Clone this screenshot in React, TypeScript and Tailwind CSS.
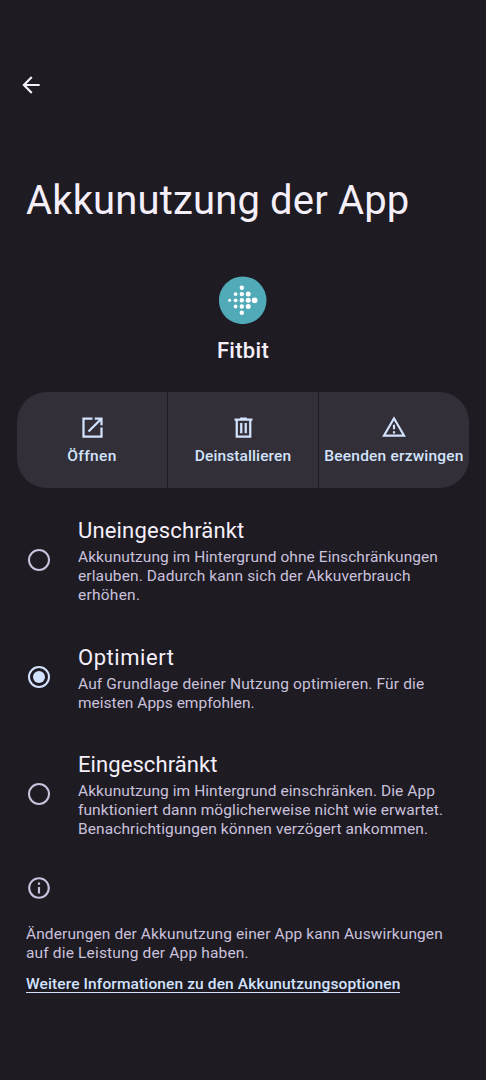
import type { ReactNode } from 'react';
import { clsx } from 'clsx';

interface Line {
  text: string;
  tracking: string;
}

interface BatteryOption {
  title: string;
  titleTracking: string;
  lines: Line[];
  selected?: boolean;
}

const options: BatteryOption[] = [
  {
    title: 'Uneingeschränkt',
    titleTracking: 'tracking-[0.16px]',
    lines: [
      { text: 'Akkunutzung im Hintergrund ohne Einschränkungen', tracking: 'tracking-[0.07px]' },
      { text: 'erlauben. Dadurch kann sich der Akkuverbrauch', tracking: 'tracking-[0.12px]' },
      { text: 'erhöhen.', tracking: 'tracking-[0.25px]' },
    ],
  },
  {
    title: 'Optimiert',
    titleTracking: 'tracking-[0.55px]',
    lines: [
      { text: 'Auf Grundlage deiner Nutzung optimieren. Für die', tracking: 'tracking-[0.14px]' },
      { text: 'meisten Apps empfohlen.', tracking: 'tracking-[0px]' },
    ],
    selected: true,
  },
  {
    title: 'Eingeschränkt',
    titleTracking: 'tracking-[0.08px]',
    lines: [
      { text: 'Akkunutzung im Hintergrund einschränken. Die App', tracking: 'tracking-[0.07px]' },
      { text: 'funktioniert dann möglicherweise nicht wie erwartet.', tracking: 'tracking-[0.08px]' },
      { text: 'Benachrichtigungen können verzögert ankommen.', tracking: 'tracking-[0.09px]' },
    ],
  },
];

const fitbitDots = [
  [10.6, 24, 1.5],
  [16.6, 17.8, 1.9], [16.6, 24, 1.9], [16.6, 30.2, 1.9],
  [22.8, 11.5, 2.2], [22.8, 17.8, 2.2], [22.8, 24, 2.2], [22.8, 30.2, 2.2], [22.8, 36.5, 2.2],
  [29.2, 17.8, 2.5], [29.2, 24, 2.5], [29.2, 30.2, 2.5],
  [35.6, 24, 2.9],
];

function FitbitLogo() {
  return (
    <svg viewBox="0 0 48 48" className="size-12">
      <circle cx="23.7" cy="24.3" r="23.8" fill="#50aab7" />
      {fitbitDots.map(([cx, cy, r]) => (
        <circle key={`${cx}-${cy}`} cx={cx} cy={cy + 0.3} r={r} fill="#fff" />
      ))}
    </svg>
  );
}

function Icon({ d, className }: { d: string; className?: string }) {
  return (
    <svg viewBox="0 0 24 24" fill="currentColor" className={clsx('shrink-0', className)}>
      <path d={d} />
    </svg>
  );
}

function ActionButton({ label, tracking, children }: { label: string; tracking: string; children: ReactNode }) {
  return (
    <button className="flex h-24 flex-1 basis-0 flex-col items-center bg-[#322f38] pt-[21px] text-[#d3e3fd]">
      <span className="flex size-7 items-center justify-center">{children}</span>
      <span className={clsx('mt-[5px] text-[15.5px] leading-5 font-medium whitespace-nowrap', tracking)}>{label}</span>
    </button>
  );
}

function Radio({ selected }: { selected?: boolean }) {
  return (
    <span
      className={clsx(
        'mb-px flex size-[22px] shrink-0 items-center justify-center rounded-full border-2',
        selected ? 'border-[#d3e3fd]' : 'border-[#cac1dc]'
      )}
    >
      {selected && <span className="size-3 rounded-full bg-[#d3e3fd]" />}
    </span>
  );
}

export default function App() {
  return (
    <div className="flex h-[1080px] w-[486px] flex-col overflow-hidden bg-[#1e1b23] font-['Roboto',sans-serif] text-[#f5effa]">
      <header className="px-[17.5px] pt-[72px]">
        <Icon
          className="size-[26px]"
          d="M20 11H7.83l5.59-5.59L12 4l-8 8 8 8 1.41-1.41L7.83 13H20v-2z"
        />
      </header>

      <h1 className="mt-[79px] ml-[26px] h-12 text-[40px] leading-[48px] tracking-[0.15px] whitespace-nowrap">
        Akkunutzung der App
      </h1>

      <div className="mt-[51px] flex flex-col items-center">
        <FitbitLogo />
        <span className="mt-[13px] text-[22px] leading-7 font-medium tracking-[0.3px]">Fitbit</span>
      </div>

      <div className="mx-[17px] mt-[27px] flex gap-px overflow-hidden rounded-[30px]">
        <ActionButton label="Öffnen" tracking="tracking-[0.4px]">
          <Icon
            className="size-[27px]"
            d="M19 19H5V5h7V3H3v18h18v-9h-2v7zM14 3v2h3.59l-9.83 9.83 1.41 1.41L19 6.41V10h2V3h-7z"
          />
        </ActionButton>
        <ActionButton label="Deinstallieren" tracking="tracking-[0.1px]">
          <Icon
            className="size-[27px]"
            d="M15 4V3H9v1H4v2h1v15h14V6h1V4h-5zm2 15H7V6h10v13zM9 8h2v9H9zm4 0h2v9h-2z"
          />
        </ActionButton>
        <ActionButton label="Beenden erzwingen" tracking="tracking-[0.2px]">
          <Icon
            className="size-[26px]"
            d="M12 5.99L19.53 19H4.47L12 5.99M12 2L1 21h22L12 2zm1 14h-2v2h2v-2zm0-6h-2v4h2v-4z"
          />
        </ActionButton>
      </div>

      <div className="mt-[28px] flex flex-col gap-[37.5px]">
        {options.map((option) => (
          <div key={option.title} className="flex items-center gap-[28px] pl-[28px]">
            <Radio selected={option.selected} />
            <div>
              <div className={clsx('mb-[2px] text-[22px] leading-[30px]', option.titleTracking)}>{option.title}</div>
              {option.lines.map((line) => (
                <div
                  key={line.text}
                  className={clsx('text-[15.5px] leading-[19px] whitespace-nowrap text-[#cac1dc]', line.tracking)}
                >
                  {line.text}
                </div>
              ))}
            </div>
          </div>
        ))}
      </div>

      <footer className="mt-[36px] flex flex-col items-start pl-[26px] text-[15.5px] leading-[19px] whitespace-nowrap text-[#cac1dc]">
        <Icon
          className="size-[26px]"
          d="M11 7h2v2h-2zm0 4h2v6h-2zm1-9C6.48 2 2 6.48 2 12s4.480 10 10 10 10-4.480 10-10S17.520 2 12 2zm0 18c-4.410 0-8-3.590-8-8s3.590-8 8-8 8 3.590 8 8-3.590 8-8 8z"
        />
        <p className="mt-[24px] tracking-[0.1px]">Änderungen der Akkunutzung einer App kann Auswirkungen</p>
        <p className="tracking-[0.16px]">auf die Leistung der App haben.</p>
        <a href="#" className="mt-[12px] h-[18px] border-b border-[#d3e3fd] leading-[18px] font-medium tracking-[0.12px] text-[#d3e3fd]">
          Weitere Informationen zu den Akkunutzungsoptionen
        </a>
      </footer>
    </div>
  );
}
